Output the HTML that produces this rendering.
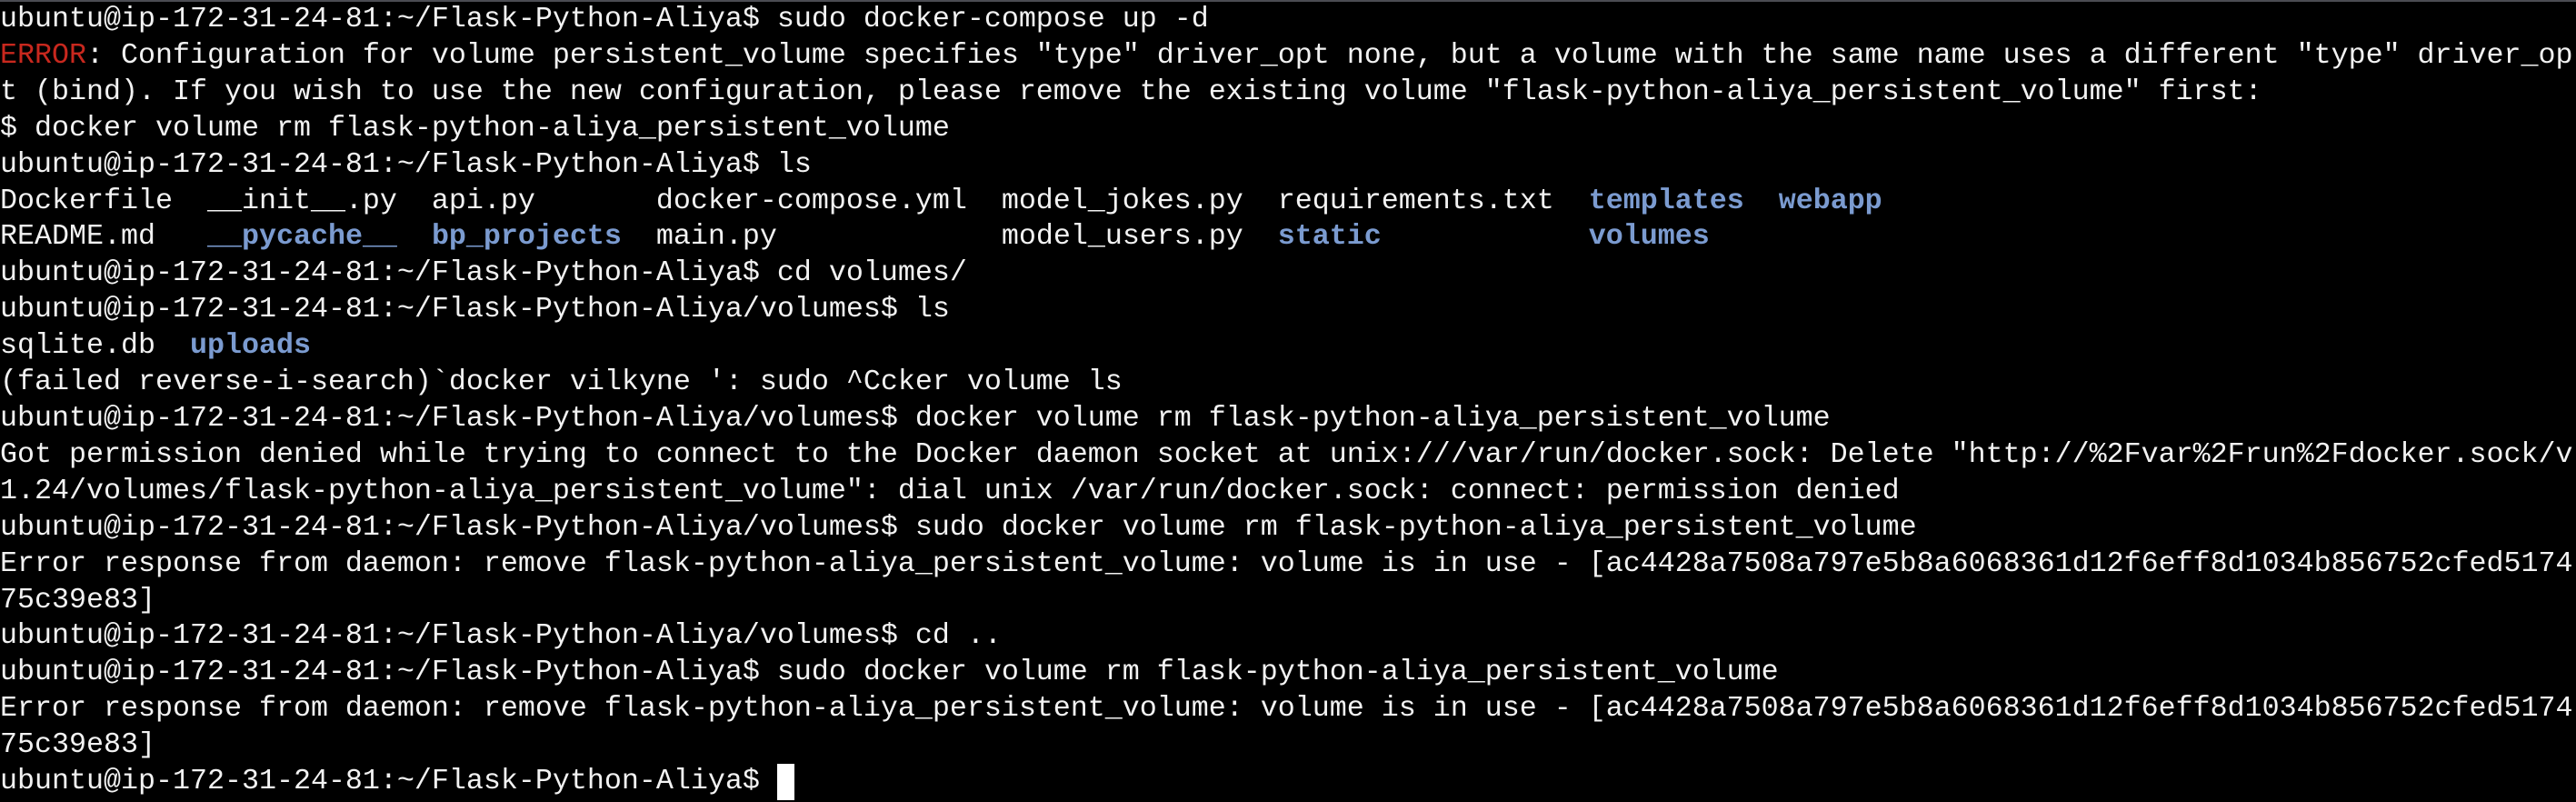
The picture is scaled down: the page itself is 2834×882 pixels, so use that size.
<!DOCTYPE html>
<html><head><meta charset="utf-8"><style>
html,body{margin:0;padding:0;background:#000;width:2834px;height:882px;overflow:hidden}
.bar{position:absolute;left:0;top:0;width:2834px;height:2px;background:#4b4c52}
pre{position:absolute;left:0;top:2px;margin:0;font-family:"Liberation Mono",monospace;font-size:31.67px;line-height:39.9px;color:#f2f2f2;white-space:pre}
.r{color:#c8281e}
.b{color:#7b9bd0;font-weight:bold}
.cur{display:inline-block;width:19px;height:40px;background:#fff;vertical-align:top}
</style></head><body><div class="bar"></div><pre>ubuntu@ip-172-31-24-81:~/Flask-Python-Aliya$ sudo docker-compose up -d
<span class="r">ERROR</span>: Configuration for volume persistent_volume specifies "type" driver_opt none, but a volume with the same name uses a different "type" driver_op
t (bind). If you wish to use the new configuration, please remove the existing volume "flask-python-aliya_persistent_volume" first:
$ docker volume rm flask-python-aliya_persistent_volume
ubuntu@ip-172-31-24-81:~/Flask-Python-Aliya$ ls
Dockerfile  __init__.py  api.py       docker-compose.yml  model_jokes.py  requirements.txt  <span class="b">templates</span>  <span class="b">webapp</span>
README.md   <span class="b">__pycache__</span>  <span class="b">bp_projects</span>  main.py             model_users.py  <span class="b">static</span>            <span class="b">volumes</span>
ubuntu@ip-172-31-24-81:~/Flask-Python-Aliya$ cd volumes/
ubuntu@ip-172-31-24-81:~/Flask-Python-Aliya/volumes$ ls
sqlite.db  <span class="b">uploads</span>
(failed reverse-i-search)`docker vilkyne ': sudo ^Ccker volume ls
ubuntu@ip-172-31-24-81:~/Flask-Python-Aliya/volumes$ docker volume rm flask-python-aliya_persistent_volume
Got permission denied while trying to connect to the Docker daemon socket at unix:///var/run/docker.sock: Delete "http://%2Fvar%2Frun%2Fdocker.sock/v
1.24/volumes/flask-python-aliya_persistent_volume": dial unix /var/run/docker.sock: connect: permission denied
ubuntu@ip-172-31-24-81:~/Flask-Python-Aliya/volumes$ sudo docker volume rm flask-python-aliya_persistent_volume
Error response from daemon: remove flask-python-aliya_persistent_volume: volume is in use - [ac4428a7508a797e5b8a6068361d12f6eff8d1034b856752cfed5174
75c39e83]
ubuntu@ip-172-31-24-81:~/Flask-Python-Aliya/volumes$ cd ..
ubuntu@ip-172-31-24-81:~/Flask-Python-Aliya$ sudo docker volume rm flask-python-aliya_persistent_volume
Error response from daemon: remove flask-python-aliya_persistent_volume: volume is in use - [ac4428a7508a797e5b8a6068361d12f6eff8d1034b856752cfed5174
75c39e83]
ubuntu@ip-172-31-24-81:~/Flask-Python-Aliya$ <span class="cur"></span></pre></body></html>
